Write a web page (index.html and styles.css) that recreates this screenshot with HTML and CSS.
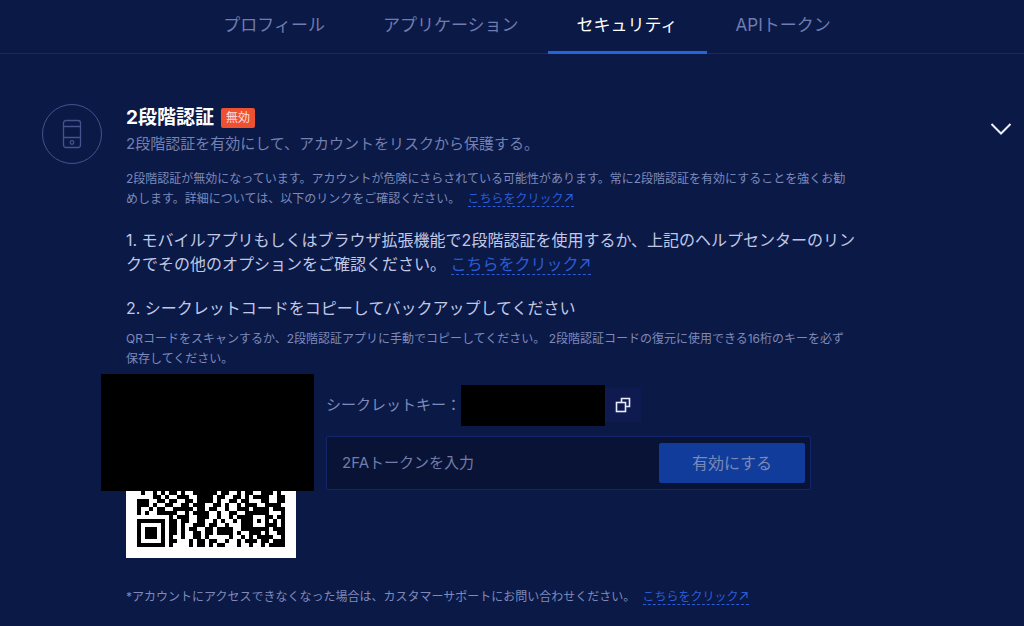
FILE: index.html
```html
<!DOCTYPE html>
<html lang="ja">
<head>
<meta charset="utf-8">
<meta name="viewport" content="width=device-width, initial-scale=1">
<title>セキュリティ</title>
<link rel="stylesheet" href="styles.css">
</head>
<body>
<svg class="defs" aria-hidden="true">
  <symbol id="arrow" viewBox="0 0 10 10"><path d="M1 8.500 8 1.500M2.500 1.500H8V7" fill="none" stroke="currentColor" stroke-width="1.2"/></symbol>
</svg>
<nav class="tabs">
  <a class="tab" href="#profile">プロフィール</a>
  <a class="tab" href="#apps">アプリケーション</a>
  <a class="tab tab-active" href="#security" aria-current="page">セキュリティ</a>
  <a class="tab" href="#api">APIトークン</a>
</nav>
<main class="panel">
  <div class="badge-icon">
    <svg width="20" height="30" viewBox="0 0 20 30" fill="none" stroke="currentColor" stroke-width="1.3"><rect x="1.5" y="1.5" width="17" height="27" rx="2.5"/><path d="M1.500 7.500h17M1.500 18.500h17"/><circle cx="10" cy="23.500" r="1.800"/></svg>
  </div>
  <div class="content">
    <header class="heading">
      <h1 class="title">2段階認証</h1>
      <span class="status">無効</span>
    </header>
    <p class="subtitle">2段階認証を有効にして、アカウントをリスクから保護する。</p>
    <p class="note">2段階認証が無効になっています。アカウントが危険にさらされている可能性があります。常に2段階認証を有効にすることを強くお勧めします。詳細については、以下のリンクをご確認ください。 <a class="link" href="#help">こちらをクリック<svg class="arrow"><use href="#arrow"/></svg></a></p>
    <p class="step step-first">1. モバイルアプリもしくはブラウザ拡張機能で2段階認証を使用するか、上記のヘルプセンターのリンクでその他のオプションをご確認ください。 <a class="link" href="#options">こちらをクリック<svg class="arrow"><use href="#arrow"/></svg></a></p>
    <h2 class="step step-second">2. シークレットコードをコピーしてバックアップしてください</h2>
    <p class="note note-qr">QRコードをスキャンするか、2段階認証アプリに手動でコピーしてください。 2段階認証コードの復元に使用できる16桁のキーを必ず保存してください。</p>
    <div class="setup">
      <div class="qr">
        <svg class="qr-code" viewBox="0 0 37 37" shape-rendering="crispEdges"><path id="qr-path"/></svg>
        <div class="qr-mask"></div>
      </div>
      <div class="fields">
        <div class="secret">
          <span>シークレットキー：</span>
          <div class="secret-mask"></div>
          <button class="copy" type="button" aria-label="コピー"><svg width="16" height="16" viewBox="0 0 16 16" fill="none" stroke="currentColor" stroke-width="1.6"><rect x="1.500" y="5.500" width="9" height="9"/><path d="M6.500 5V1.500h8v8H11"/></svg></button>
        </div>
        <form class="token">
          <input class="token-input" type="text" placeholder="2FAトークンを入力" aria-label="2FAトークンを入力">
          <button class="enable" type="button">有効にする</button>
        </form>
      </div>
    </div>
    <p class="note support">*アカウントにアクセスできなくなった場合は、カスタマーサポートにお問い合わせください。 <a class="link" href="#support">こちらをクリック<svg class="arrow"><use href="#arrow"/></svg></a></p>
  </div>
  <button class="toggle" type="button" aria-label="閉じる"><svg width="22" height="14" viewBox="0 0 22 14" fill="none" stroke="currentColor" stroke-width="2"><path d="M1.500 2 11 11.500 20.500 2"/></svg></button>
</main>
<script src="qr.js"></script>
</body>
</html>
```
FILE: styles.css
```css
* { box-sizing: border-box; }
body {
  margin: 0;
  min-height: 100vh;
  background: #0b1946;
  color: #7d8abb;
  font-family: Inter, "Noto Sans CJK JP", sans-serif;
  font-size: 12px;
  line-height: 20px;
}
h1, h2, p { margin: 0; }
button { border: 0; padding: 0; font: inherit; cursor: pointer; }
.defs { position: absolute; width: 0; height: 0; }
.tabs {
  display: flex;
  justify-content: center;
  height: 54px;
  padding-left: 30px;
  border-bottom: 1px solid #1a2868;
}
.tab {
  height: 54px;
  padding: 0 29px;
  color: #6f7cb1;
  font-size: 17px;
  line-height: 50px;
  text-decoration: none;
  white-space: nowrap;
}
.tab-active {
  color: #fff;
  border-bottom: 3px solid #2861dc;
}
.panel {
  display: flex;
  align-items: flex-start;
  padding: 50px 12px 20px 42px;
}
.badge-icon {
  display: flex;
  flex: none;
  align-items: center;
  justify-content: center;
  width: 60px;
  height: 60px;
  margin-right: 24px;
  border: 1px solid #46528e;
  border-radius: 50%;
  color: #46528e;
}
.content { flex: 0 1 736px; min-width: 0; }
.heading { display: flex; align-items: center; gap: 7px; height: 28px; }
.title { color: #fff; font-size: 19px; font-weight: 700; line-height: 28px; }
.status {
  padding: 0 5px;
  border-radius: 2px;
  background: #ee5032;
  color: #ffe2da;
}
.subtitle { font-size: 15px; line-height: 24px; color: #7380b3; }
.note { max-width: 729px; margin-top: 13px; }
.link {
  color: #2a5cd8;
  text-decoration: none;
  border-bottom: 1px dashed #2a5cd8;
}
.note .link { margin-left: 4px; }
.arrow { width: 10px; height: 10px; }
.step { color: #c0c8e6; font-size: 16px; font-weight: 400; line-height: 24px; }
.step .arrow { width: 12px; height: 12px; }
.step-first { margin-top: 19px; }
.step-second { margin-top: 20px; }
.note-qr { margin-top: 9px; }
.setup { display: flex; gap: 30px; margin-top: 19px; }
.qr {
  position: relative;
  flex: none;
  width: 170px;
  height: 170px;
  padding: 11px;
  background: #fff;
}
.qr-code { display: block; width: 148px; height: 148px; }
.qr-mask {
  position: absolute;
  top: -14px;
  left: -25px;
  width: 213px;
  height: 117px;
  background: #000;
}
.fields { flex: 0 1 485px; min-width: 0; }
.secret {
  display: flex;
  align-items: center;
  height: 34px;
  font-size: 15px;
}
.secret-mask { flex: none; width: 144px; height: 41px; background: #000; }
.copy {
  display: flex;
  align-items: center;
  justify-content: center;
  width: 36px;
  height: 34px;
  background: #0f1b50;
  color: #e8ecfa;
}
.token {
  display: flex;
  height: 54px;
  margin-top: 14px;
  padding: 6px 5px;
  border: 1px solid #14256c;
  border-radius: 2px;
  background: #091335;
}
.token-input {
  flex: 1;
  min-width: 0;
  padding: 0 10px;
  border: 0;
  background: transparent;
  color: #fff;
  font: inherit;
  font-size: 15px;
}
.token-input::placeholder { color: #717dab; opacity: 1; }
.enable {
  width: 146px;
  border-radius: 2px;
  background: #123c9b;
  color: #7789b9;
  font-size: 16px;
}
.support { margin-top: 29px; }
.toggle {
  flex: none;
  display: flex;
  margin: 18px 0 0 auto;
  background: transparent;
  color: #eef1fc;
}
```
FILE: qr.js
```js
const rows = [
  '.1..1.1.11.1..111111.11..1.11..111.1.',
  '....11.1..111..1111.11..11.1.1111..11',
  '111..11.11..11.1111.1..11.11...11..11',
  '111.1..11..11.111..11.1..1.111..1111.',
  '1..1.11..11111.11.11..1..111.1111.111',
  '1.1..11111..1.1111..1..11..111111...1',
  '........1.111..111..1..1.1111...11.11',
  '1111111.11.11..11..1.1..1.111.1.1.1.1',
  '1.....1.11.1..111.11..1...111...111.1',
  '1.111.1.11.1.11..11.1111..1111111.111',
  '1.111.1.11.1..11.11.1111.1..111.1..11',
  '1.111.1.1..1..11.1.....1..1.1.1111..1',
  '1.....1.11...1.11.11..1..1.111.11.111',
  '1111111.1....1.11.1.11...1..1..1.1111'
];
const first = 37 - rows.length;
let d = '';
rows.forEach((row, y) => {
  [...row].forEach((cell, x) => {
    if (cell === '1') d += `M${x} ${y + first}h1v1h-1z`;
  });
});
document.getElementById('qr-path').setAttribute('d', d);
```
